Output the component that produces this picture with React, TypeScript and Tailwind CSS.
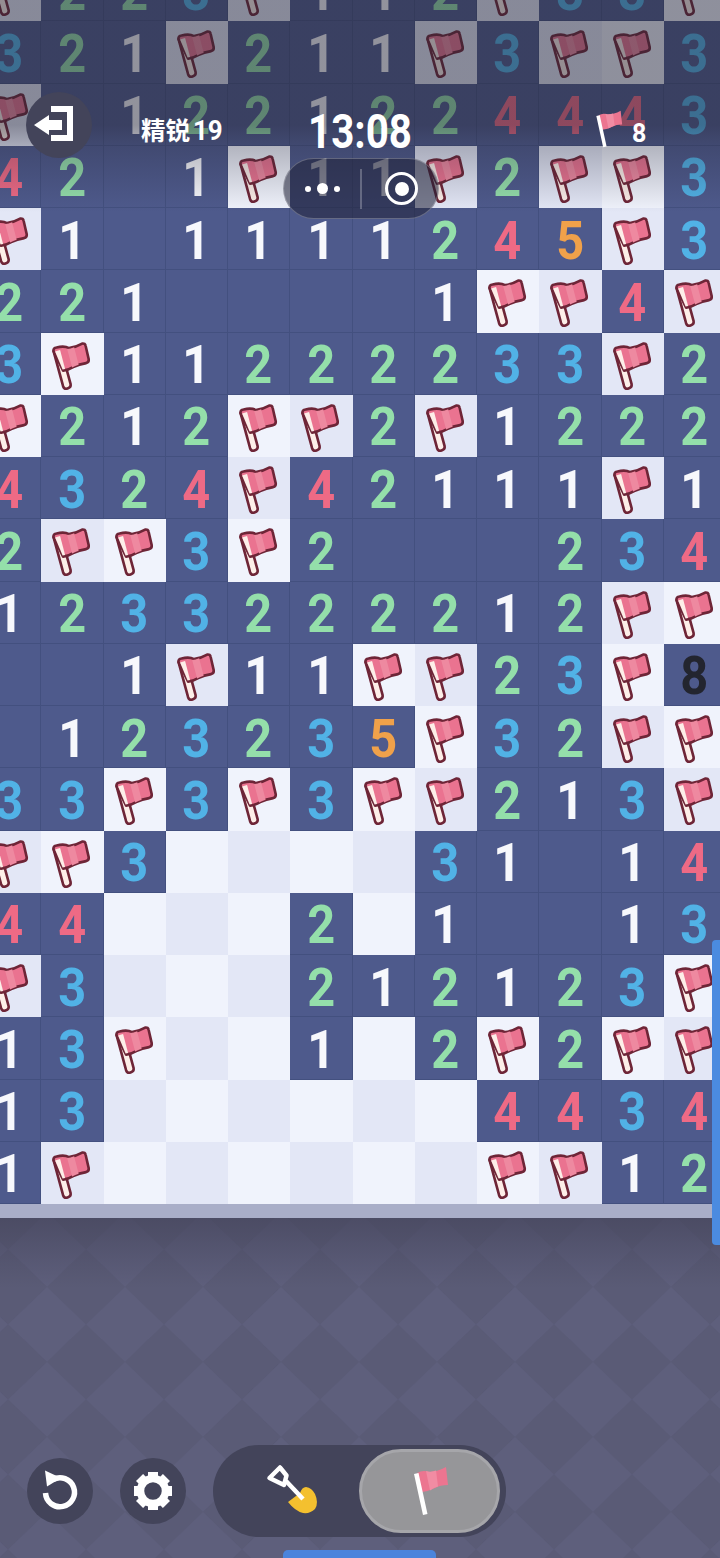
import React from "react";

const ROWS: string[] = [
  "F,2,2,3,F,1,1,2,F,3,3,F",
  "3,2,1,F,2,1,1,F,3,F,F,3",
  "F,,1,2,2,1,2,2,4,4,4,3",
  "4,2,,1,F,1,1,F,2,F,F,3",
  "F,1,,1,1,1,1,2,4,5,F,3",
  "2,2,1,,,,,1,F,F,4,F",
  "3,F,1,1,2,2,2,2,3,3,F,2",
  "F,2,1,2,F,F,2,F,1,2,2,2",
  "4,3,2,4,F,4,2,1,1,1,F,1",
  "2,F,F,3,F,2,,,,2,3,4",
  "1,2,3,3,2,2,2,2,1,2,F,F",
  ",,1,F,1,1,F,F,2,3,F,8",
  ",1,2,3,2,3,5,F,3,2,F,F",
  "3,3,F,3,F,3,F,F,2,1,3,F",
  "F,F,3,O,O,O,O,3,1,,1,4",
  "4,4,O,O,O,2,O,1,,,1,3",
  "F,3,O,O,O,2,1,2,1,2,3,F",
  "1,3,F,O,O,1,O,2,F,2,F,F",
  "1,3,O,O,O,O,O,O,4,4,3,4",
  "1,F,O,O,O,O,O,O,F,F,1,2",
];

const DIGIT: Record<string, string> = {
  "1": "text-[#f7f8fc]",
  "2": "text-[#94dfaa]",
  "3": "text-[#51b2e6]",
  "4": "text-[#ee6a85]",
  "5": "text-[#f0a14a]",
  "8": "text-[#23252f]",
};

function Flag() {
  return (
    <svg viewBox="0 0 62 62" className="h-full w-full">
      <path d="M12.500 18 L20 16 L29.500 51 Q30 54 27 55 L25.500 55.500 Q23 56 22 53 Z" fill="#fdeee8" stroke="#6e2537" strokeWidth="2.600" strokeLinejoin="round" />
      <path d="M12.500 18 Q12 15 15.500 14.500 Q23 12.500 28 15 Q35 14 41 10.500 Q44 10 44.500 13 L47.500 26 Q48 29 45 30 Q38 31 32 34 Q27 37 22 37.500 Z" fill="#ea7390" stroke="#6e2537" strokeWidth="2.600" strokeLinejoin="round" />
      <path d="M26 15.800 Q29 16 33 14.200 L37.500 31.500 Q34 32.500 31 34.400 Z" fill="#ee89a0" />
      <path d="M14 18.500 L19 17 L24 35.800 L21.500 36.300 Z" fill="#fdeee8" />
    </svg>
  );
}

function Cell({ v, r, c }: { v: string; r: number; c: number }) {
  if (v === "F" || v === "O") {
    const tone = (r + c) % 2 === 1 ? "bg-[#f0f3fc]" : "bg-[#e3e7f6]";
    return <div className={`h-full w-full ${tone}`}>{v === "F" && <Flag />}</div>;
  }
  return (
    <div className="flex h-full w-full items-center justify-center border-r border-b border-[#43507f] bg-[#4e5a8c]">
      {v && (
        <span className={`scale-x-[0.92] pt-[5px] font-['Roboto',sans-serif] text-[53px] leading-none font-bold ${DIGIT[v]}`}>
          {v}
        </span>
      )}
    </div>
  );
}

function Diamonds() {
  const items: React.ReactNode[] = [];
  for (let j = -2; j < 10; j++) {
    for (let i = -1; i < 21; i++) {
      if ((i + j) % 2 !== 0) continue;
      const x = 8 + 39 * i;
      const y = 69 + 37.5 * j;
      items.push(
        <polygon
          key={`${i}-${j}`}
          points={`${x},${y - 37.5} ${x + 39},${y} ${x},${y + 37.5} ${x - 39},${y}`}
          fill={j % 2 === 0 ? "#5a5b76" : "#5e5f7c"}
        />
      );
    }
  }
  return (
    <svg viewBox="0 0 720 340" className="absolute inset-0 h-full w-full">
      {items}
    </svg>
  );
}

function ExitIcon() {
  return (
    <svg viewBox="0 0 66 66" className="h-full w-full" fill="#fff">
      <path d="M25 14 H47 V49 H25 V43 H41 V20 H25 Z" />
      <path d="M8 33 L23 23 V28 H36 V38 H23 V43 Z" />
    </svg>
  );
}

function RestartIcon() {
  return (
    <svg viewBox="0 0 66 66" className="h-full w-full">
      <path d="M26 21.500 A14.500 14.500 0 1 1 18.500 35" fill="none" stroke="#fff" strokeWidth="5.500" />
      <path d="M18 12.500 L34 20 L20 28.500 Z" fill="#fff" />
    </svg>
  );
}

function GearIcon() {
  const teeth = [0, 45, 90, 135, 180, 225, 270, 315];
  return (
    <svg viewBox="0 0 66 66" className="h-full w-full">
      {teeth.map((a) => (
        <rect key={a} x="28" y="14" width="10" height="8" fill="#fff" transform={`rotate(${a} 33 33)`} />
      ))}
      <circle cx="33" cy="33" r="12.500" fill="none" stroke="#fff" strokeWidth="7.500" />
    </svg>
  );
}

function Shovel() {
  return (
    <svg viewBox="0 0 60 60" className="h-[60px] w-[60px]">
      <path d="M26 41 L38 32 Q40 26 44 26 Q50 27 53 33 Q57 42 53 48 Q48 53 41 52 Q33 50 26 41 Z" fill="#f4c02f" />
      <path d="M18 6.500 L24.500 14.500 L22 24 L7.500 17 Z" fill="none" stroke="#fff" strokeWidth="4.500" strokeLinejoin="round" />
      <path d="M24 20 L41 38" stroke="#fff" strokeWidth="4.500" />
    </svg>
  );
}

function MiniFlag({ className }: { className: string }) {
  return (
    <svg viewBox="0 0 36 50" className={className}>
      <path d="M5 7 Q11 3.500 17 6 Q25 6 34 1 L36 19 Q28 19 23 22 Q17 25 10 26 Z" fill="#ec7590" />
      <path d="M14 5 Q19 6.500 24 4.600 L26 20.500 Q22 21.500 18 24.500 Z" fill="#f18ca3" />
      <path d="M2 8 L6.500 7 L15.500 48 L11 49 Z" fill="#fff" />
    </svg>
  );
}

export default function App() {
  return (
    <div className="relative flex h-[1558px] w-[720px] flex-col overflow-hidden bg-[#5b5c79] font-['Roboto','Noto_Sans_CJK_SC',sans-serif]">
      <div className="-mt-[41px] -ml-[21px] grid w-[747px] shrink-0 grid-cols-[repeat(12,62.25px)] auto-rows-[62.25px]">
        {ROWS.flatMap((row, r) =>
          row.split(",").map((v, c) => <Cell key={`${r}-${c}`} v={v} r={r} c={c} />)
        )}
      </div>
      <div className="h-[14px] shrink-0 bg-[#a9aec8]" />

      <div className="relative flex flex-1 items-end pb-[21px] pl-[27px]">
        <Diamonds />
        <div className="absolute inset-x-0 top-0 h-[70px] bg-gradient-to-b from-[#45455c]/70 to-transparent" />
        <div className="relative flex items-center gap-[27px]">
          <div className="h-[66px] w-[66px] rounded-full bg-[#43445a]">
            <RestartIcon />
          </div>
          <div className="h-[66px] w-[66px] rounded-full bg-[#43445a]">
            <GearIcon />
          </div>
          <div className="flex h-[92px] w-[293px] items-center rounded-full bg-[#43445a] pr-[6px]">
            <div className="flex flex-1 items-center justify-center pl-[11px]">
              <Shovel />
            </div>
            <div className="flex h-[84px] w-[141px] items-center justify-center rounded-full border-[3px] border-[#a6a6aa] bg-[#969699]">
              <MiniFlag className="h-[50px] w-[36px]" />
            </div>
          </div>
        </div>
      </div>

      {/* dim layer behind the status area */}
      <div className="pointer-events-none absolute inset-x-0 top-0 h-[212px] bg-[linear-gradient(to_bottom,rgba(36,36,52,0.48)_0%,rgba(36,36,52,0.48)_59%,rgba(36,36,52,0.3)_69%,rgba(36,36,52,0)_100%)]" />

      {/* header */}
      <div className="absolute top-[92px] left-[26px] h-[66px] w-[66px] rounded-full bg-[#43445a]">
        <ExitIcon />
      </div>
      <div className="absolute top-[113px] left-[141px] text-[27px] leading-[34px] font-bold whitespace-nowrap text-white">
        <span className="font-['Noto_Sans_CJK_SC',sans-serif] text-[24.500px]">精锐</span>
        <span className="ml-[3px] inline-block origin-left scale-x-[0.96]">19</span>
      </div>
      <div className="absolute top-[104px] left-[308px] origin-left scale-x-[0.84] text-[48px] leading-[56px] font-bold text-white">
        13:08
      </div>
      <MiniFlag className="absolute top-[110px] left-[594px] h-[38px] w-[29px]" />
      <div className="absolute top-[119px] left-[632px] text-[25px] leading-[30px] font-bold text-white">8</div>

      {/* capsule */}
      <div className="absolute top-[158px] left-[283px] flex h-[61px] w-[156px] items-center rounded-full border-[1.500px] border-white/25 bg-[#1f2136]/55">
        <div className="flex w-[76px] items-center justify-center gap-[6px]">
          <span className="h-[6px] w-[6px] rounded-full bg-white" />
          <span className="h-[11px] w-[11px] rounded-full bg-white" />
          <span className="h-[6px] w-[6px] rounded-full bg-white" />
        </div>
        <div className="h-[40px] w-[1.500px] bg-white/25" />
        <div className="flex flex-1 items-center justify-center pl-[4px]">
          <div className="flex h-[33px] w-[33px] items-center justify-center rounded-full border-[3px] border-white">
            <span className="h-[14px] w-[14px] rounded-full bg-white" />
          </div>
        </div>
      </div>

      {/* scroll bar and home indicator */}
      <div className="absolute top-[940px] right-0 h-[305px] w-[8px] rounded-l-[4px] bg-[#4b8be0]" />
      <div className="absolute bottom-0 left-[283px] h-[8px] w-[153px] rounded-t-[5px] bg-[#4b84dc]" />
    </div>
  );
}
